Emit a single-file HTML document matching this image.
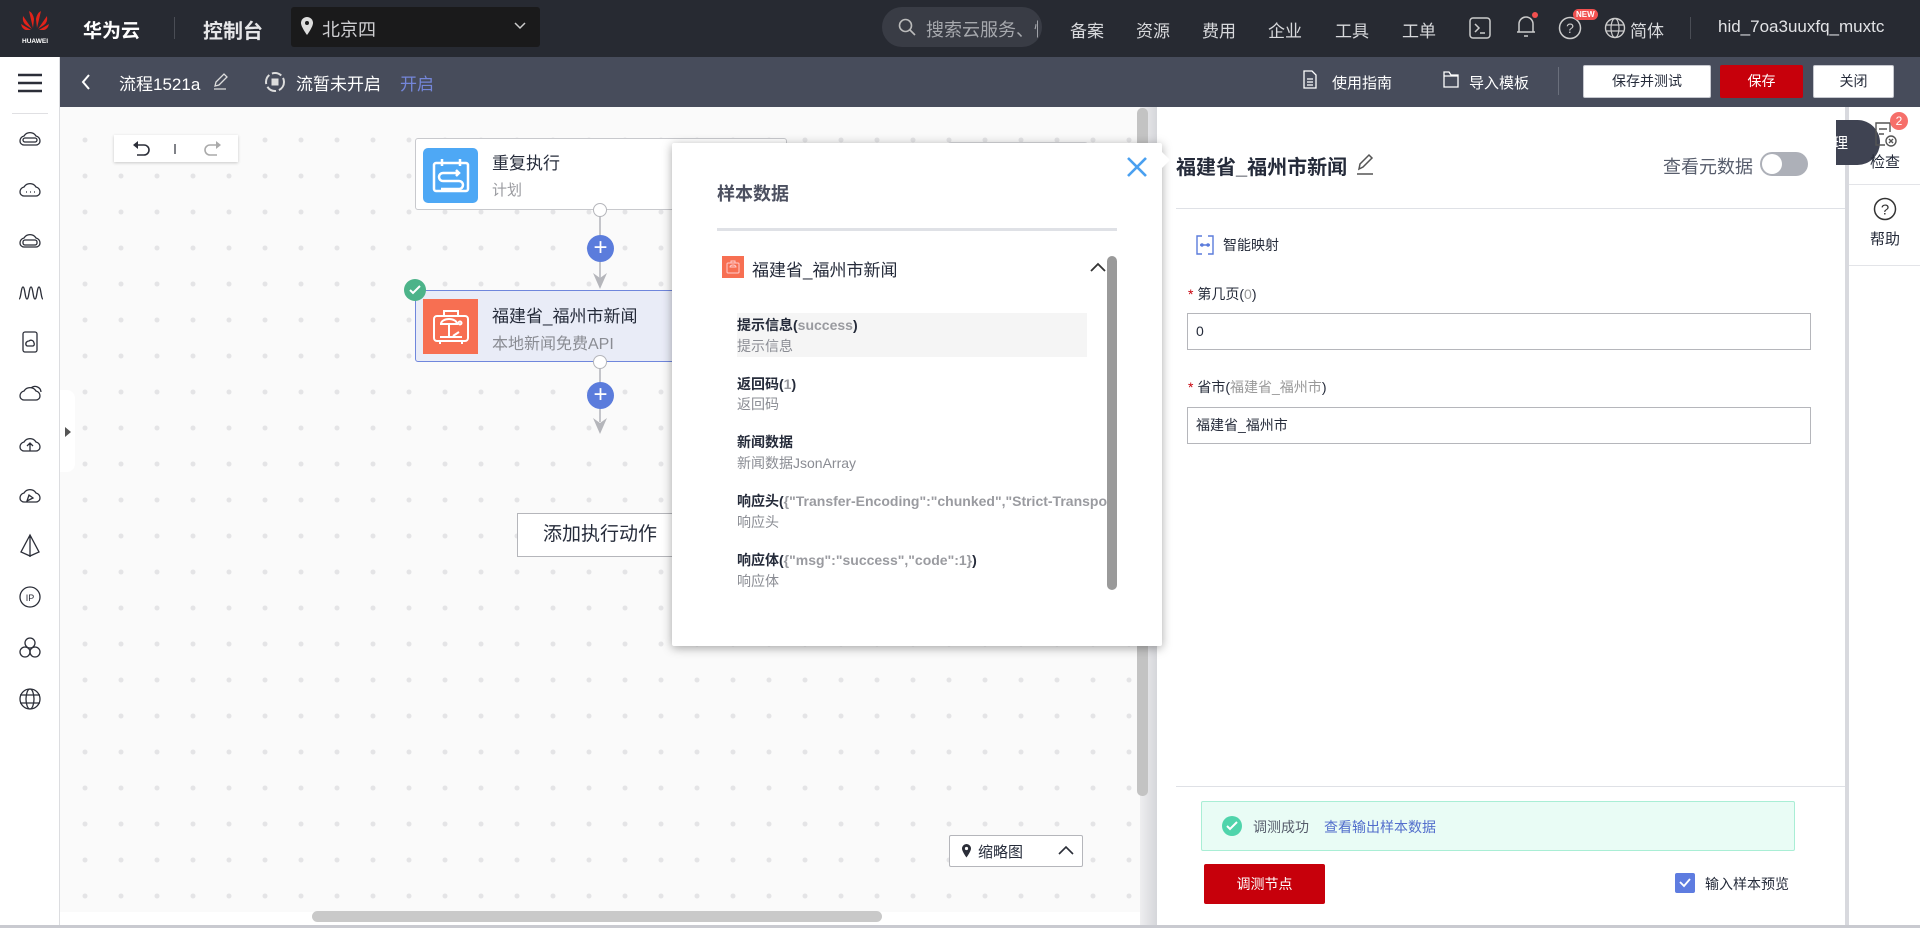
<!DOCTYPE html>
<html><head><meta charset="utf-8">
<style>
*{box-sizing:border-box;margin:0;padding:0}
body{width:1920px;height:928px;overflow:hidden;font-family:"Liberation Sans","Noto Sans CJK SC",sans-serif;background:#fff;position:relative;color:#252b3a}
.abs{position:absolute}
.top{left:0;top:0;width:1920px;height:57px;background:#272a32}
.tb{left:60px;top:57px;width:1860px;height:50px;background:#474c5b}
.nav{color:#d8d9dc;font-size:17px;top:17px}
.canvas{left:60px;top:107px;width:1080px;height:805px;background-color:#fafafa;background-image:radial-gradient(circle,#e4e4e6 2.2px,transparent 2.8px);background-size:36px 36px;background-position:7px -21px}
.side{left:0;top:57px;width:60px;height:871px;background:#fff;border-right:1px solid #dcdde0}
.btn{border:1px solid #c6c8cf;background:#fff;font-size:14px;text-align:center;line-height:31px;top:65px;height:33px;border-radius:2px;color:#252b3a}
.it-t{font-size:14px;font-weight:bold;color:#252b3a;left:737px}
.it-t span{color:#9a9ba0;font-weight:bold}
.it-s{font-size:14px;color:#8a8c93;left:737px}
.lbl{font-size:14px;color:#252b3a}
</style></head><body>
<div class="abs top"></div>
<svg class="abs" style="left:20px;top:8px" width="30" height="38" viewBox="0 0 30 38">
<g fill="#e2231a"><path d="M13 20 L9 3 Q13 5 14 11Z"/><path d="M17 20 L21 3 Q17 5 16 11Z"/><path d="M12 21 L3 8 Q2 14 6 17Z"/><path d="M18 21 L27 8 Q28 14 24 17Z"/><path d="M11 22 L1 16 Q2 21 6 22Z"/><path d="M19 22 L29 16 Q28 21 24 22Z"/></g>
<text x="15" y="35" font-size="6.5" fill="#fff" text-anchor="middle" font-family="Liberation Sans" font-weight="bold">HUAWEI</text></svg>
<div class="abs" style="left:83px;top:16px;color:#fff;font-size:19px;font-weight:bold">华为云</div>
<div class="abs" style="left:174px;top:17px;width:1px;height:22px;background:#4a4d55"></div>
<div class="abs" style="left:203px;top:15px;color:#e6e6e8;font-size:20px;font-weight:bold">控制台</div>
<div class="abs" style="left:291px;top:7px;width:249px;height:40px;background:#1a1a1b;border-radius:3px"></div>
<svg class="abs" style="left:300px;top:16px" width="14" height="20" viewBox="0 0 14 20"><path d="M7 1a6 6 0 0 0-6 6c0 4 6 12 6 12s6-8 6-12a6 6 0 0 0-6-6z" fill="#ddd"/><circle cx="7" cy="7" r="2" fill="#1a1a1b"/></svg>
<div class="abs" style="left:322px;top:16px;color:#cfcfd2;font-size:18px">北京四</div>
<svg class="abs" style="left:514px;top:22px" width="12" height="8"><path d="M1 1l5 5 5-5" stroke="#ccc" stroke-width="1.5" fill="none"/></svg>
<div class="abs" style="left:882px;top:7px;width:160px;height:40px;background:#393c45;border-radius:20px"></div>
<svg class="abs" style="left:898px;top:18px" width="18" height="18"><circle cx="7.5" cy="7.5" r="6" stroke="#bbb" stroke-width="1.6" fill="none"/><path d="M12 12l5 5" stroke="#bbb" stroke-width="1.6"/></svg>
<div class="abs" style="left:926px;top:16px;color:#a6a8ad;font-size:18px;width:112px;overflow:hidden;white-space:nowrap">搜索云服务、快</div>
<div class="abs nav" style="left:1070px">备案</div>
<div class="abs nav" style="left:1136px">资源</div>
<div class="abs nav" style="left:1202px">费用</div>
<div class="abs nav" style="left:1268px">企业</div>
<div class="abs nav" style="left:1335px">工具</div>
<div class="abs nav" style="left:1402px">工单</div>
<svg class="abs" style="left:1469px;top:17px" width="22" height="22"><rect x="1" y="1" width="20" height="20" rx="3" stroke="#ccc" stroke-width="1.5" fill="none"/><path d="M6 7l4 4-4 4M11 16h5" stroke="#ccc" stroke-width="1.5" fill="none"/></svg>
<svg class="abs" style="left:1514px;top:12px" width="24" height="28"><path d="M5 20V12a7 7 0 0 1 14 0v8zM3 20h18M10 24h4" stroke="#ccc" stroke-width="1.5" fill="none"/><circle cx="21" cy="3" r="3" fill="#f2504f"/></svg>
<svg class="abs" style="left:1558px;top:16px" width="24" height="24"><circle cx="12" cy="12" r="10.5" stroke="#ccc" stroke-width="1.5" fill="none"/><text x="12" y="17" text-anchor="middle" font-size="14" fill="#ccc" font-family="Liberation Sans">?</text></svg>
<div class="abs" style="left:1573px;top:9px;background:#f2504f;color:#fff;font-size:8px;border-radius:7px;padding:1px 3px;font-weight:bold">NEW</div>
<svg class="abs" style="left:1604px;top:17px" width="22" height="22"><circle cx="11" cy="11" r="9.5" stroke="#ccc" stroke-width="1.4" fill="none"/><ellipse cx="11" cy="11" rx="4" ry="9.5" stroke="#ccc" stroke-width="1.2" fill="none"/><path d="M2 8h18M2 14h18" stroke="#ccc" stroke-width="1.2"/></svg>
<div class="abs nav" style="left:1630px">简体</div>
<div class="abs" style="left:1690px;top:17px;width:1px;height:22px;background:#4a4d55"></div>
<div class="abs nav" style="left:1718px;color:#e2e3e6">hid_7oa3uuxfq_muxtc</div>

<div class="abs tb"></div>
<div class="abs side"></div>
<svg class="abs" style="left:18px;top:73px" width="24" height="20"><path d="M0 2h24M0 10h24M0 18h24" stroke="#2b2e38" stroke-width="2.4"/></svg>
<div class="abs" style="left:12px;top:113px;width:36px;height:1px;background:#e0e0e3"></div>
<svg class="abs" style="left:80px;top:74px" width="12" height="16"><path d="M9 1L3 8l6 7" stroke="#fff" stroke-width="2" fill="none"/></svg>
<div class="abs" style="left:119px;top:70px;color:#fff;font-size:17px">流程1521a</div>
<svg class="abs" style="left:212px;top:72px" width="16" height="18"><path d="M3 14l1-4 8-8 3 3-8 8z M2 17h12" stroke="#ddd" stroke-width="1.3" fill="none"/></svg>
<svg class="abs" style="left:264px;top:71px" width="22" height="22"><circle cx="11" cy="11" r="9" stroke="#ddd" stroke-width="2" fill="none" stroke-dasharray="10 3"/><rect x="7.5" y="7.5" width="7" height="7" fill="#ddd"/></svg>
<div class="abs" style="left:296px;top:70px;color:#fff;font-size:17px">流暂未开启</div>
<div class="abs" style="left:400px;top:70px;color:#7486d9;font-size:17px">开启</div>
<svg class="abs" style="left:1303px;top:70px" width="14" height="19"><path d="M1 1h8l4 4v13H1z M4 9h6M4 12h6M4 15h6" stroke="#fff" stroke-width="1.3" fill="none"/></svg>
<div class="abs" style="left:1332px;top:72px;color:#fff;font-size:15px">使用指南</div>
<svg class="abs" style="left:1443px;top:71px" width="16" height="17"><path d="M1 1h5l2 3h7v12H1z M1 5h14" stroke="#fff" stroke-width="1.3" fill="none"/></svg>
<div class="abs" style="left:1469px;top:72px;color:#fff;font-size:15px">导入模板</div>
<div class="abs" style="left:1558px;top:67px;width:1px;height:28px;background:#6a6f7c"></div>
<div class="abs btn" style="left:1583px;width:128px">保存并测试</div>
<div class="abs btn" style="left:1720px;width:83px;background:#c7000b;border-color:#c7000b;color:#fff">保存</div>
<div class="abs btn" style="left:1813px;width:81px">关闭</div>

<!-- left side icons: centers at y=138+51k -->
<svg class="abs" style="left:16px;top:126px" width="28" height="590" viewBox="0 0 28 590" fill="none" stroke="#2b2e38" stroke-width="1.3">
<g transform="translate(1,0)"><path d="M3 15a5 5 0 0 1 4-5 7 7 0 0 1 12 0 5 5 0 0 1 4 5 4 4 0 0 1-4 4H7a4 4 0 0 1-4-4z"/><rect x="6" y="12" width="14" height="4" rx="2"/></g>
<g transform="translate(1,51)"><path d="M3 15a5 5 0 0 1 4-5 7 7 0 0 1 12 0 5 5 0 0 1 4 5 4 4 0 0 1-4 4H7a4 4 0 0 1-4-4z M9 15h1M13 15h1M17 15h1"/></g>
<g transform="translate(1,102)"><path d="M3 15a5 5 0 0 1 4-5 7 7 0 0 1 12 0 5 5 0 0 1 4 5 4 4 0 0 1-4 4H7a4 4 0 0 1-4-4z"/><rect x="6" y="12" width="14" height="5" rx="2"/></g>
<g transform="translate(1,153)"><path d="M2 20c2 0 2-12 4-12s2 12 4 12 2-12 4-12 2 12 4 12 2-12 4-12 2 12 4 12"/></g>
<g transform="translate(1,204)"><rect x="6" y="2" width="14" height="20" rx="2"/><path d="M9 15a3 3 0 0 1 3-4 3 3 0 0 1 5 2 2 2 0 0 1-1 3h-6z"/></g>
<g transform="translate(1,255)"><path d="M3 15a5 5 0 0 1 4-5 7 7 0 0 1 12 0 5 5 0 0 1 4 5 4 4 0 0 1-4 4H7a4 4 0 0 1-4-4z M14 7a6 6 0 0 1 10 4"/></g>
<g transform="translate(1,306)"><path d="M3 15a5 5 0 0 1 4-5 7 7 0 0 1 12 0 5 5 0 0 1 4 5 4 4 0 0 1-4 4H7a4 4 0 0 1-4-4z M13 19v-8M10 14l3-3 3 3"/></g>
<g transform="translate(1,357)"><path d="M3 15a5 5 0 0 1 4-5 7 7 0 0 1 12 0 5 5 0 0 1 4 5 4 4 0 0 1-4 4H7a4 4 0 0 1-4-4z M10 18l2-6 4 3z"/></g>
<g transform="translate(1,408)"><path d="M13 1v22M13 1l-9 17 9 4 9-4z"/></g>
<g transform="translate(1,459)"><circle cx="13" cy="12" r="10"/><text x="13" y="16" font-size="9" fill="#2b2e38" stroke="none" text-anchor="middle" font-family="Liberation Sans">IP</text></g>
<g transform="translate(1,510)"><circle cx="13" cy="7" r="5"/><circle cx="8" cy="16" r="5"/><circle cx="18" cy="16" r="5"/></g>
<g transform="translate(1,561)"><circle cx="13" cy="12" r="10"/><ellipse cx="13" cy="12" rx="4" ry="10"/><path d="M3 8h20M3 16h20"/></g>
</svg>

<div class="abs canvas"></div>
<div class="abs" style="left:60px;top:912px;width:1080px;height:13px;background:#fff"></div>
<div class="abs" style="left:312px;top:911px;width:570px;height:11px;background:#c9c9c9;border-radius:6px"></div>
<div class="abs" style="left:0;top:925px;width:1920px;height:3px;background:#c9cad0"></div>
<div class="abs" style="left:60px;top:390px;width:15px;height:82px;background:#fff;border-radius:0 8px 8px 0"></div>
<svg class="abs" style="left:64px;top:426px" width="8" height="12"><path d="M1 1l6 5-6 5z" fill="#555"/></svg>
<div class="abs" style="left:114px;top:135px;width:124px;height:27px;background:#fff;box-shadow:0 1px 3px rgba(0,0,0,.2)"></div>
<svg class="abs" style="left:132px;top:140px" width="90" height="18"><path d="M4 5h8a5 5 0 0 1 0 10H5" stroke="#2b2e38" stroke-width="1.6" fill="none"/><path d="M1 5l5-4v8z" fill="#2b2e38"/><path d="M43 4v10" stroke="#2b2e38" stroke-width="1.2"/><path d="M86 5h-8a5 5 0 0 0 0 10h7" stroke="#aaa" stroke-width="1.6" fill="none"/><path d="M89 5l-5-4v8z" fill="#aaa"/></svg>

<div class="abs" style="left:415px;top:138px;width:372px;height:72px;background:#fff;border:1px solid #c8c9cd;border-radius:3px"></div>
<div class="abs" style="left:423px;top:148px;width:55px;height:55px;background:#4ea8f5;border-radius:5px"></div>
<svg class="abs" style="left:431px;top:157px" width="40" height="38" viewBox="0 0 40 38" fill="none" stroke="#fff" stroke-width="2.5"><rect x="3" y="6" width="34" height="28" rx="2"/><path d="M11 2v7M29 2v7M12 16h16M12 16a4 4 0 0 0 0 8h16a4 4 0 0 1 0 8H10M25 13l3 3-3 3"/></svg>
<div class="abs" style="left:492px;top:149px;font-size:17px;color:#252b3a">重复执行</div>
<div class="abs" style="left:492px;top:179px;font-size:15px;color:#9a9ba0">计划</div>
<div class="abs" style="left:599px;top:210px;width:2px;height:70px;background:#c4c5ca"></div>
<div class="abs" style="left:593px;top:203px;width:14px;height:14px;border-radius:50%;background:#fff;border:1.5px solid #b5b6bb"></div>
<div class="abs" style="left:587px;top:235px;width:27px;height:27px;border-radius:50%;background:#5b7cdc;color:#fff;font-size:24px;line-height:25px;text-align:center">+</div>
<svg class="abs" style="left:593px;top:273px" width="14" height="16"><path d="M0 0l7 5 7-5-7 16z" fill="#b5b6bb"/></svg>
<div class="abs" style="left:415px;top:290px;width:372px;height:72px;background:#e9ecf7;border:1.5px solid #6f86dc;border-radius:3px"></div>
<div class="abs" style="left:423px;top:299px;width:55px;height:55px;background:#f76f52"></div>
<svg class="abs" style="left:431px;top:307px" width="40" height="40" viewBox="0 0 40 40" fill="none" stroke="#fff" stroke-width="2"><rect x="3" y="9" width="34" height="25" rx="3"/><path d="M13 9V4h14v5M9 34v3M31 34v3M10 17a8 5 0 0 1 16 0zM18 17v12M9 30h22M22 29l6-4"/><circle cx="29" cy="16" r="1.5"/></svg>
<div class="abs" style="left:492px;top:302px;font-size:17px;color:#252b3a">福建省_福州市新闻</div>
<div class="abs" style="left:492px;top:330px;font-size:16px;color:#8a8c93">本地新闻免费API</div>
<div class="abs" style="left:404px;top:279px;width:22px;height:22px;border-radius:50%;background:#4cb389"></div>
<svg class="abs" style="left:409px;top:285px" width="12" height="10"><path d="M1 5l3 3 7-7" stroke="#fff" stroke-width="2" fill="none"/></svg>
<div class="abs" style="left:599px;top:362px;width:2px;height:60px;background:#c4c5ca"></div>
<div class="abs" style="left:593px;top:355px;width:14px;height:14px;border-radius:50%;background:#fff;border:1.5px solid #b5b6bb"></div>
<div class="abs" style="left:587px;top:382px;width:27px;height:27px;border-radius:50%;background:#5b7cdc;color:#fff;font-size:24px;line-height:25px;text-align:center">+</div>
<svg class="abs" style="left:593px;top:418px" width="14" height="16"><path d="M0 0l7 5 7-5-7 16z" fill="#b5b6bb"/></svg>
<div class="abs" style="left:517px;top:513px;width:200px;height:44px;background:#fff;border:1px solid #b5b6bb;font-size:19px;line-height:42px;padding-left:25px;color:#252b3a">添加执行动作</div>
<div class="abs" style="left:948px;top:142px;width:140px;height:30px;background:#fff;border:1px solid #d8d9dd;border-radius:3px"></div>

<div class="abs" style="left:949px;top:835px;width:134px;height:32px;background:#fff;border:1px solid #b5b6bb;border-radius:2px"></div>
<svg class="abs" style="left:961px;top:843px" width="11" height="16"><path d="M5.5 1a4.5 4.5 0 0 0-4.5 4.5c0 3 4.5 9 4.5 9s4.5-6 4.5-9A4.5 4.5 0 0 0 5.5 1z" fill="#2b2e38"/><circle cx="5.5" cy="5.5" r="1.6" fill="#fff"/></svg>
<div class="abs" style="left:978px;top:841px;font-size:15px">缩略图</div>
<svg class="abs" style="left:1058px;top:845px" width="16" height="10"><path d="M1 9l7-7 7 7" stroke="#2b2e38" stroke-width="1.6" fill="none"/></svg>

<div class="abs" style="left:1140px;top:107px;width:17px;height:818px;background:linear-gradient(90deg,#eeeef0,#d5d6da)"></div>
<div class="abs" style="left:1137px;top:108px;width:11px;height:688px;background:#c3c3c3;border-radius:5px"></div>

<div class="abs" style="left:1157px;top:107px;width:688px;height:818px;background:#fff"></div>
<div class="abs" style="left:1176px;top:151px;font-size:20px;font-weight:bold;color:#252b3a">福建省_福州市新闻</div>
<svg class="abs" style="left:1355px;top:152px" width="20" height="24"><path d="M4 17l1-5 9-9 3 3-9 9z M2 22h16" stroke="#555" stroke-width="1.5" fill="none"/></svg>
<div class="abs" style="left:1663px;top:153px;font-size:18px;color:#575d6c">查看元数据</div>
<div class="abs" style="left:1760px;top:152px;width:48px;height:24px;border-radius:12px;background:#adb0b8"></div>
<div class="abs" style="left:1762px;top:154px;width:20px;height:20px;border-radius:50%;background:#fff"></div>
<div class="abs" style="left:1176px;top:208px;width:669px;height:1px;background:#dfe1e6"></div>
<svg class="abs" style="left:1195px;top:235px" width="20" height="20" fill="none" stroke="#5b7cdc" stroke-width="1.4"><path d="M7 1H2v18h5M13 1h5v18h-5M5 10h10"/><circle cx="7" cy="10" r="1" fill="#5b7cdc"/><circle cx="13" cy="10" r="1" fill="#5b7cdc"/></svg>
<div class="abs lbl" style="left:1223px;top:235px">智能映射</div>
<div class="abs lbl" style="left:1188px;top:284px"><span style="color:#c7000b">*</span> 第几页(<span style="color:#999">0</span>)</div>
<div class="abs" style="left:1187px;top:313px;width:624px;height:37px;border:1px solid #b5b6bb;font-size:14px;line-height:35px;padding-left:8px">0</div>
<div class="abs lbl" style="left:1188px;top:377px"><span style="color:#c7000b">*</span> 省市(<span style="color:#999">福建省_福州市</span>)</div>
<div class="abs" style="left:1187px;top:407px;width:624px;height:37px;border:1px solid #b5b6bb;font-size:14px;line-height:35px;padding-left:8px">福建省_福州市</div>
<div class="abs" style="left:1176px;top:786px;width:669px;height:1px;background:#dfe1e6"></div>
<div class="abs" style="left:1201px;top:801px;width:594px;height:50px;background:#e9fcf5;border:1px solid #a9eed5;border-radius:2px"></div>
<div class="abs" style="left:1222px;top:816px;width:20px;height:20px;border-radius:50%;background:#50d4ab"></div>
<svg class="abs" style="left:1226px;top:821px" width="12" height="10"><path d="M1 5l3 3 7-7" stroke="#fff" stroke-width="2" fill="none"/></svg>
<div class="abs lbl" style="left:1253px;top:817px;color:#575d6c">调测成功</div>
<div class="abs lbl" style="left:1324px;top:817px;color:#526ecc">查看输出样本数据</div>
<div class="abs" style="left:1204px;top:864px;width:121px;height:40px;background:#c7000b;border-radius:2px;color:#fff;font-size:14px;line-height:40px;text-align:center">调测节点</div>
<div class="abs" style="left:1675px;top:873px;width:20px;height:20px;border-radius:2px;background:#5e7ce0"></div>
<svg class="abs" style="left:1679px;top:878px" width="12" height="10"><path d="M1 4l4 4 6-7" stroke="#fff" stroke-width="1.8" fill="none"/></svg>
<div class="abs lbl" style="left:1705px;top:874px">输入样本预览</div>

<div class="abs" style="left:1845px;top:107px;width:4px;height:818px;background:#d8d9de"></div>
<div class="abs" style="left:1849px;top:107px;width:71px;height:818px;background:#fff"></div>
<div class="abs" style="left:1849px;top:184px;width:71px;height:1px;background:#e3e4e8"></div>
<div class="abs" style="left:1849px;top:265px;width:71px;height:1px;background:#e3e4e8"></div>
<div class="abs" style="left:1836px;top:120px;width:44px;height:45px;background:#3f4352;border-radius:0 23px 23px 0;overflow:hidden"><span style="position:absolute;left:-3px;top:12px;color:#fff;font-size:15px">理</span></div>
<svg class="abs" style="left:1872px;top:120px" width="26" height="30" fill="none" stroke="#555" stroke-width="1.4"><path d="M18 12V3H4v22h9M7 9h8M7 14h5"/><circle cx="19" cy="21" r="5"/><path d="M17 19l4 4M21 19l-4 4"/></svg>
<div class="abs" style="left:1890px;top:112px;width:18px;height:18px;border-radius:50%;background:#f66f6a;color:#fff;font-size:12px;text-align:center;line-height:18px">2</div>
<div class="abs" style="left:1870px;top:151px;font-size:15px">检查</div>
<svg class="abs" style="left:1873px;top:197px" width="24" height="24"><circle cx="12" cy="12" r="10.5" stroke="#333" stroke-width="1.5" fill="none"/><text x="12" y="17.5" text-anchor="middle" font-size="15" fill="#333" font-family="Liberation Sans">?</text></svg>
<div class="abs" style="left:1870px;top:228px;font-size:15px">帮助</div>

<div class="abs" style="left:672px;top:143px;width:490px;height:503px;background:#fff;box-shadow:0 2px 10px rgba(0,0,0,.35);border-radius:2px"></div>
<svg class="abs" style="left:1160px;top:150px" width="12" height="20"><path d="M0 0l10 10-10 10z" fill="#fff"/></svg>
<svg class="abs" style="left:1126px;top:156px" width="22" height="22"><path d="M2 2l18 18M20 2L2 20" stroke="#4aa0f0" stroke-width="2.6"/></svg>
<div class="abs" style="left:717px;top:180px;font-size:18px;font-weight:bold;color:#4c5060">样本数据</div>
<div class="abs" style="left:717px;top:228px;width:400px;height:3px;background:#dfe1e6"></div>
<div class="abs" style="left:722px;top:256px;width:22px;height:22px;background:#f76f52"></div>
<svg class="abs" style="left:725px;top:259px" width="16" height="16" fill="none" stroke="#fcc" stroke-width="1"><rect x="2" y="4" width="12" height="10" rx="1"/><path d="M6 4V2h4v2M5 8a3 2 0 0 1 6 0z"/></svg>
<div class="abs" style="left:752px;top:256px;font-size:17px;color:#252b3a">福建省_福州市新闻</div>
<svg class="abs" style="left:1090px;top:262px" width="16" height="10"><path d="M1 9l7-7 7 7" stroke="#333" stroke-width="1.8" fill="none"/></svg>
<div class="abs" style="left:1107px;top:256px;width:10px;height:334px;background:#9a9a9a;border-radius:5px"></div>
<div class="abs" style="left:737px;top:313px;width:350px;height:44px;background:#f5f5f5"></div>
<div class="abs it-t" style="top:315px">提示信息(<span>success</span>)</div>
<div class="abs it-s" style="top:336px">提示信息</div>
<div class="abs it-t" style="top:374px">返回码(<span>1</span>)</div>
<div class="abs it-s" style="top:394px">返回码</div>
<div class="abs it-t" style="top:432px">新闻数据</div>
<div class="abs it-s" style="top:453px">新闻数据JsonArray</div>
<div class="abs it-t" style="top:491px;width:370px;overflow:hidden;white-space:nowrap">响应头(<span>{"Transfer-Encoding":"chunked","Strict-Transport-Security":"max-age"}</span></div>
<div class="abs it-s" style="top:512px">响应头</div>
<div class="abs it-t" style="top:550px">响应体(<span>{"msg":"success","code":1}</span>)</div>
<div class="abs it-s" style="top:571px">响应体</div>
</body></html>
